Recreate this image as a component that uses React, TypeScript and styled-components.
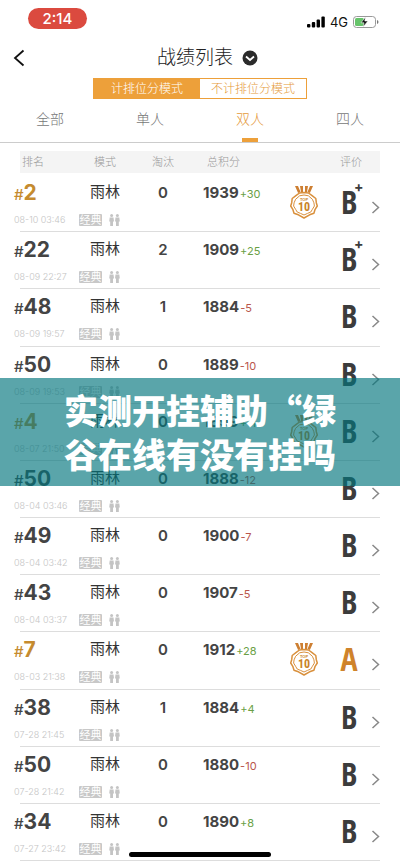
import React from "react";
import styled, { createGlobalStyle } from "styled-components";

const GlobalStyle = createGlobalStyle`
  *, *::before, *::after { box-sizing: border-box; }
  body {
    margin: 0;
    background: #fff;
    color: #444;
    font-family: Inter, "Noto Sans CJK SC", sans-serif;
  }
  button { font: inherit; padding: 0; border: 0; background: none; cursor: pointer; }
  h1 { margin: 0; }
`;

const Page = styled.main`
  position: relative;
  display: flex;
  flex-direction: column;
  min-height: 100vh;
  padding-bottom: 4px;
`;

const StatusBar = styled.div`
  display: flex;
  align-items: center;
  justify-content: space-between;
  height: 44px;
  padding: 0 21px 7px 28px;
`;

const Clock = styled.span`
  width: 59px;
  border-radius: 11px;
  background: #db4a3f;
  color: #fff;
  font-size: 15px;
  font-weight: 500;
  line-height: 21px;
  text-align: center;
`;

const StatusIcons = styled.div`
  display: flex;
  align-items: center;
  gap: 5px;
  padding-top: 7px;
  color: #111;
  font-size: 13px;
  line-height: 16px;
`;

const Header = styled.header`
  display: grid;
  grid-template-columns: 40px 1fr 40px;
  align-items: center;
  height: 34px;
  padding-bottom: 6px;
`;

const BackButton = styled.button`
  display: flex;
  padding-left: 13px;
`;

const TitleGroup = styled.div`
  display: flex;
  align-items: center;
  justify-content: center;
  gap: 9px;
  padding-left: 15px;
`;

const Title = styled.h1`
  color: #222;
  font-size: 19px;
  font-weight: 300;
  line-height: 28px;
`;

const IconButton = styled.button`
  display: flex;
`;

const Segments = styled.div`
  display: flex;
  align-self: center;
  border: 1px solid #eda03a;
`;

const Segment = styled.button<{ $active?: boolean }>`
  width: 106px;
  background: ${(p) => (p.$active ? "#eda03a" : "#fff")};
  color: ${(p) => (p.$active ? "#fff" : "#e59a3a")};
  font-size: 12px;
  font-weight: 300;
  line-height: 19px;
  white-space: nowrap;
`;

const Tabs = styled.nav`
  display: grid;
  grid-template-columns: repeat(4, 1fr);
  border-bottom: 1px solid #ccc;
`;

const Tab = styled.button<{ $active?: boolean }>`
  display: flex;
  flex-direction: column;
  align-items: center;
  justify-content: space-between;
  height: 43px;
  padding-top: 10px;
  color: ${(p) => (p.$active ? "#e59a3a" : "#777")};
  font-size: 14px;
  font-weight: 300;
  line-height: 20px;

  &::after {
    content: "";
    width: 16px;
    height: 4px;
    background: ${(p) => (p.$active ? "#eda03a" : "transparent")};
  }
`;

const Results = styled.table`
  display: flex;
  flex: 1;
  flex-direction: column;
  padding-top: 8px;
`;

const Head = styled.thead`
  display: block;
  margin: 0 20px 2px;
  background: #f4f4f4;
`;

const Body = styled.tbody`
  display: flex;
  flex: 1;
  flex-direction: column;
  margin: 0 20px;
`;

const Row = styled.tr`
  display: grid;
  grid-template-columns: 59fr 52fr 64fr 95fr 30fr 49fr 11fr;
  > * { padding: 0; min-width: 0; }
`;

const Entry = styled(Row)`
  flex: 1;
  min-height: 57px;
  border-bottom: 1px solid #ddd;
`;

const HeadCell = styled.th<{ $align?: "left" | "center"; $inset?: number }>`
  && { padding-left: ${(p) => p.$inset ?? 0}px; }
  color: #999;
  font-size: 11px;
  font-weight: 300;
  line-height: 22px;
  text-align: ${(p) => p.$align ?? "center"};
`;

const RankCell = styled.td`
  margin-left: -6px;
`;

const Rank = styled.div<{ $top: boolean }>`
  height: 36px;
  color: ${(p) => (p.$top ? "#c58b2f" : "#444")};
  font-size: 21px;
  font-weight: 700;
  line-height: 36px;
`;

const Hash = styled.span`
  font-size: 15px;
  font-weight: 500;
`;

const Played = styled.time`
  display: block;
  color: #c4c4c4;
  font-size: 9px;
  font-weight: 300;
  line-height: 18px;
  white-space: nowrap;
`;

const ModeName = styled.div`
  height: 36px;
  color: #333;
  font-size: 15px;
  font-weight: 400;
  line-height: 34px;
  text-align: center;
`;

const Tags = styled.div`
  display: flex;
  align-items: center;
  gap: 7px;
  height: 18px;
`;

const Tag = styled.span`
  width: 23px;
  border-radius: 1px;
  background: #c8c8c8;
  color: #fff;
  font-size: 11px;
  line-height: 12px;
  text-align: center;
`;

const Kills = styled.td`
  font-size: 15px;
  font-weight: 600;
  line-height: 36px;
  text-align: center;
`;

const Score = styled.td`
  && { padding-left: 8px; }
  font-size: 15px;
  font-weight: 700;
  line-height: 36px;
  white-space: nowrap;
`;

const Delta = styled.span<{ $gain: boolean }>`
  padding-left: 1px;
  color: ${(p) => (p.$gain ? "#6a9f45" : "#b9564c")};
  font-size: 11px;
  font-weight: 400;
`;

const MedalCell = styled.td`
  && { padding-top: 11px; }
`;

const GradeCell = styled.td`
  && { padding: 9px 0 0 9px; }
  text-align: center;
`;

const Grade = styled.span<{ $gold: boolean }>`
  position: relative;
  color: ${(p) => (p.$gold ? "#cf832b" : "#3c3c3c")};
  font-family: "Noto Sans ExtraCondensed", "Open Sans Condensed", "Roboto Condensed", "Liberation Sans Narrow", sans-serif;
  font-size: 32px;
  font-weight: 700;
  line-height: 36px;
`;

const Plus = styled.sup`
  position: absolute;
  top: 0;
  left: 13px;
  font-family: Inter, sans-serif;
  font-size: 14px;
  line-height: 14px;
`;

const MoreCell = styled.td`
  display: flex;
  justify-content: flex-end;
  && { padding-top: 26px; }
`;

const Banner = styled.aside`
  position: absolute;
  top: 378px;
  right: 0;
  left: 0;
  display: flex;
  justify-content: center;
  padding: 10px 0;
  background: rgba(2, 117, 124, 0.65);
`;

const BannerText = styled.p`
  width: 272px;
  margin: 0;
  color: #fff;
  font-family: "Noto Sans CJK SC", sans-serif;
  font-size: 34px;
  font-weight: 900;
  line-height: 44px;
`;

const HomeBar = styled.div`
  position: fixed;
  bottom: 8px;
  left: 50%;
  width: 142px;
  height: 5px;
  margin-left: -71px;
  border-radius: 3px;
  background: #000;
`;

const Signal = () => (
  <svg width="18" height="12" viewBox="0 0 18 12" fill="#000" aria-hidden="true">
    <rect x="0" y="8" width="3.4" height="3.5" rx="1" />
    <rect x="4.8" y="6" width="3.4" height="5.5" rx="1" />
    <rect x="9.6" y="3.4" width="3.4" height="8.1" rx="1" />
    <rect x="14.4" y="0.5" width="3.4" height="11" rx="1" />
  </svg>
);

const Battery = () => (
  <svg width="26" height="12" viewBox="0 0 26 12" aria-hidden="true">
    <rect x="0.5" y="0.5" width="22" height="11" rx="3" fill="#fff" stroke="#999" />
    <rect x="2" y="2" width="9" height="8" rx="1.5" fill="#66c46a" />
    <path d="M24 4v4q1.500-.7 1.500-2T24 4z" fill="#777" />
    <path d="M12.500 1 8 6.800h3L10 11l5-6h-3.200z" fill="#111" stroke="#fff" strokeWidth=".6" />
  </svg>
);

const Medal = () => (
  <svg width="28" height="33" viewBox="0 0 28 33" role="img" aria-label="TOP 10">
    <g fill="#cd7f32">
      <path d="M5 0h3l2.500 6-2.400 1zM10 0h3v6h-2zM15 0h3l-1 6h-2zM20 0h3l-3.100 7-2.400-1z" />
    </g>
    <g fill="none" stroke="#d9903c" strokeLinejoin="round">
      <path strokeWidth="1.500" d="M14 6.500 18.500 7l3.600 2.700 3.700 2.800.5 4.200 1 3.300-2.200 3.300-1.200 4-4.300 1.500L14 32l-5.600-3.200L4 27.300l-1.200-4L.7 20l1-3.300.5-4.200 3.700-2.800L9.500 7z" />
      <path strokeWidth="1" d="M14 9l4.400.8 4 3.500 1.500 3.500.5 3.200-2 3.300-1.600 2.700-3.300 1.400L14 29l-3.500-1.600L7.200 26l-1.600-2.700-2-3.300.5-3.200 1.500-3.500 4-3.500z" />
    </g>
    <g fill="#c98227" fontWeight="700" textAnchor="middle">
      <text x="14" y="15" fontSize="4" fontFamily="Liberation Sans, sans-serif">TOP</text>
      <text x="14" y="25" fontSize="12" fontFamily="Roboto Condensed, Liberation Sans Narrow, sans-serif">10</text>
    </g>
  </svg>
);

const Duo = () => (
  <svg width="11" height="12" viewBox="0 0 11 12" fill="#c4c4c4" role="img" aria-label="双人">
    <circle cx="2.600" cy="1.500" r="1.500" />
    <path d="M.7 3.500h3.800l.5 4H4V12H1.200V7.500h-1z" />
    <circle cx="8.400" cy="1.500" r="1.500" />
    <path d="M6.500 3.500h3.800l.5 4h-1V12H7V7.500H6z" />
  </svg>
);

type Match = {
  rank: number;
  played: string;
  kills: number;
  score: number;
  delta: number;
  grade: string;
};

const matches: Match[] = [
  { rank: 2, played: "08-10 03:46", kills: 0, score: 1939, delta: 30, grade: "B+" },
  { rank: 22, played: "08-09 22:27", kills: 2, score: 1909, delta: 25, grade: "B+" },
  { rank: 48, played: "08-09 19:57", kills: 1, score: 1884, delta: -5, grade: "B" },
  { rank: 50, played: "08-09 19:53", kills: 0, score: 1889, delta: -10, grade: "B" },
  { rank: 4, played: "08-07 21:50", kills: 0, score: 1899, delta: 11, grade: "B" },
  { rank: 50, played: "08-04 03:46", kills: 0, score: 1888, delta: -12, grade: "B" },
  { rank: 49, played: "08-04 03:42", kills: 0, score: 1900, delta: -7, grade: "B" },
  { rank: 43, played: "08-04 03:37", kills: 0, score: 1907, delta: -5, grade: "B" },
  { rank: 7, played: "08-03 21:38", kills: 0, score: 1912, delta: 28, grade: "A" },
  { rank: 38, played: "07-28 21:45", kills: 1, score: 1884, delta: 4, grade: "B" },
  { rank: 50, played: "07-28 21:42", kills: 0, score: 1880, delta: -10, grade: "B" },
  { rank: 34, played: "07-27 23:42", kills: 0, score: 1890, delta: 8, grade: "B" },
];

const MatchRow = ({ match }: { match: Match }) => {
  const top = match.rank <= 10;
  return (
    <Entry>
      <RankCell>
        <Rank $top={top}><Hash>#</Hash>{match.rank}</Rank>
        <Played>{match.played}</Played>
      </RankCell>
      <td>
        <ModeName>雨林</ModeName>
        <Tags><Tag>经典</Tag><Duo /></Tags>
      </td>
      <Kills>{match.kills}</Kills>
      <Score>
        {match.score}
        <Delta $gain={match.delta > 0}>{match.delta > 0 ? `+${match.delta}` : match.delta}</Delta>
      </Score>
      <MedalCell>{top && <Medal />}</MedalCell>
      <GradeCell>
        <Grade $gold={match.grade === "A"}>
          {match.grade[0]}
          {match.grade.endsWith("+") && <Plus>+</Plus>}
        </Grade>
      </GradeCell>
      <MoreCell>
        <IconButton aria-label="查看详情">
          <svg width="9" height="13" viewBox="0 0 9 13" fill="none" stroke="#888" strokeWidth="1.500">
            <path d="M1.500 1l6 5.500-6 5.500" />
          </svg>
        </IconButton>
      </MoreCell>
    </Entry>
  );
};

export default function App() {
  return (
    <>
      <GlobalStyle />
      <Page lang="zh-CN">
        <StatusBar>
          <Clock>2:14</Clock>
          <StatusIcons><Signal /><span>4G</span><Battery /></StatusIcons>
        </StatusBar>
        <Header>
          <BackButton aria-label="返回">
            <svg width="12" height="18" viewBox="0 0 12 18" fill="none" stroke="#111" strokeWidth="1.800">
              <path d="M10.500 1.500 2 9l8.500 7.500" />
            </svg>
          </BackButton>
          <TitleGroup>
            <Title>战绩列表</Title>
            <IconButton aria-label="选择赛季">
              <svg width="16" height="16" viewBox="0 0 16 16" fill="none">
                <circle cx="8" cy="8" r="7.500" fill="#2b2b2b" />
                <path d="M4 6.500 8 10l4-3.500" stroke="#fff" strokeWidth="1.800" />
              </svg>
            </IconButton>
          </TitleGroup>
        </Header>
        <Segments>
          <Segment $active>计排位分模式</Segment>
          <Segment>不计排位分模式</Segment>
        </Segments>
        <Tabs>
          <Tab>全部</Tab>
          <Tab>单人</Tab>
          <Tab $active>双人</Tab>
          <Tab>四人</Tab>
        </Tabs>
        <Results>
          <Head>
            <Row>
              <HeadCell $align="left" $inset={2}>排名</HeadCell>
              <HeadCell>模式</HeadCell>
              <HeadCell>淘汰</HeadCell>
              <HeadCell $align="left" $inset={12}>总积分</HeadCell>
              <HeadCell />
              <HeadCell $inset={13}>评价</HeadCell>
              <HeadCell />
            </Row>
          </Head>
          <Body>
            {matches.map((match) => <MatchRow key={match.played} match={match} />)}
          </Body>
        </Results>
        <Banner><BannerText>实测开挂辅助“绿谷在线有没有挂吗</BannerText></Banner>
      </Page>
      <HomeBar />
    </>
  );
}
